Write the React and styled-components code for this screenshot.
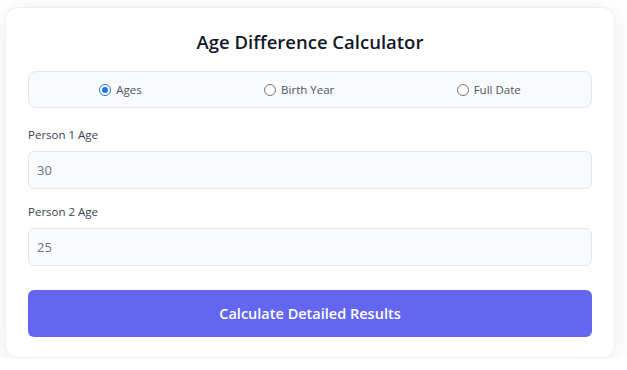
import React, { useState } from "react";
import styled, { createGlobalStyle } from "styled-components";

const GlobalStyle = createGlobalStyle`
  body {
    margin: 0;
    background: #ffffff;
    font-family: "Open Sans", "Noto Sans", sans-serif;
  }
`;

const Card = styled.div`
  box-sizing: border-box;
  width: 610px;
  margin: 7px 0 0 5px;
  padding: 19px 22px 20px 22px;
  background: #ffffff;
  border: 1px solid #f0f0f0;
  border-radius: 12px;
  box-shadow: 0 4px 24px rgba(0, 0, 0, 0.08);
  display: flex;
  flex-direction: column;
`;

const Title = styled.h1`
  margin: 0 0 14px;
  text-align: center;
  font-size: 18.5px;
  font-weight: 600;
  color: #111827;
  line-height: 30px;
`;

const ModeGroup = styled.div`
  box-sizing: border-box;
  display: flex;
  justify-content: space-around;
  height: 37px;
  padding: 0 9px;
  background: #f8fafc;
  border: 1px solid #e2e8f0;
  border-radius: 8px;
  margin-bottom: 19px;
`;

const ModeOption = styled.label`
  display: flex;
  align-items: center;
  gap: 5px;
  font-size: 11.5px;
  color: #4b5563;
  cursor: pointer;
`;

const Dot = styled.span`
  box-sizing: border-box;
  width: 12px;
  height: 12px;
  border-radius: 50%;
  border: 1px solid ${(p) => (p.$on ? "#1a73e8" : "#767676")};
  background: #fff;
  display: flex;
  align-items: center;
  justify-content: center;

  &::after {
    content: "";
    width: 6px;
    height: 6px;
    border-radius: 50%;
    background: ${(p) => (p.$on ? "#1a73e8" : "transparent")};
  }
`;

const Field = styled.div`
  display: flex;
  flex-direction: column;
  margin-bottom: 15px;
`;

const Label = styled.label`
  font-size: 11.5px;
  font-weight: 500;
  color: #374151;
  line-height: 16px;
  margin-bottom: 8px;
`;

const Input = styled.input`
  box-sizing: border-box;
  height: 38px;
  padding: 0 8px;
  background: #f9fafb;
  border: 1px solid #e5e7eb;
  border-radius: 6px;
  font-family: inherit;
  font-size: 13px;
  color: #6b7280;
  outline: none;
`;

const Button = styled.button`
  height: 47px;
  margin-top: 9px;
  border: none;
  border-radius: 6px;
  background: #6366f1;
  color: #ffffff;
  font-family: inherit;
  font-size: 14.5px;
  font-weight: 600;
  cursor: pointer;
`;

const modes = ["Ages", "Birth Year", "Full Date"];

export default function App() {
  const [mode, setMode] = useState("Ages");
  const [a, setA] = useState("30");
  const [b, setB] = useState("25");

  return (
    <>
      <GlobalStyle />
      <Card>
        <Title>Age Difference Calculator</Title>
        <ModeGroup>
          {modes.map((m) => (
            <ModeOption key={m} onClick={() => setMode(m)}>
              <Dot $on={mode === m} />
              {m}
            </ModeOption>
          ))}
        </ModeGroup>
        <Field>
          <Label>Person 1 Age</Label>
          <Input value={a} onChange={(e) => setA(e.target.value)} />
        </Field>
        <Field>
          <Label>Person 2 Age</Label>
          <Input value={b} onChange={(e) => setB(e.target.value)} />
        </Field>
        <Button>Calculate Detailed Results</Button>
      </Card>
    </>
  );
}
